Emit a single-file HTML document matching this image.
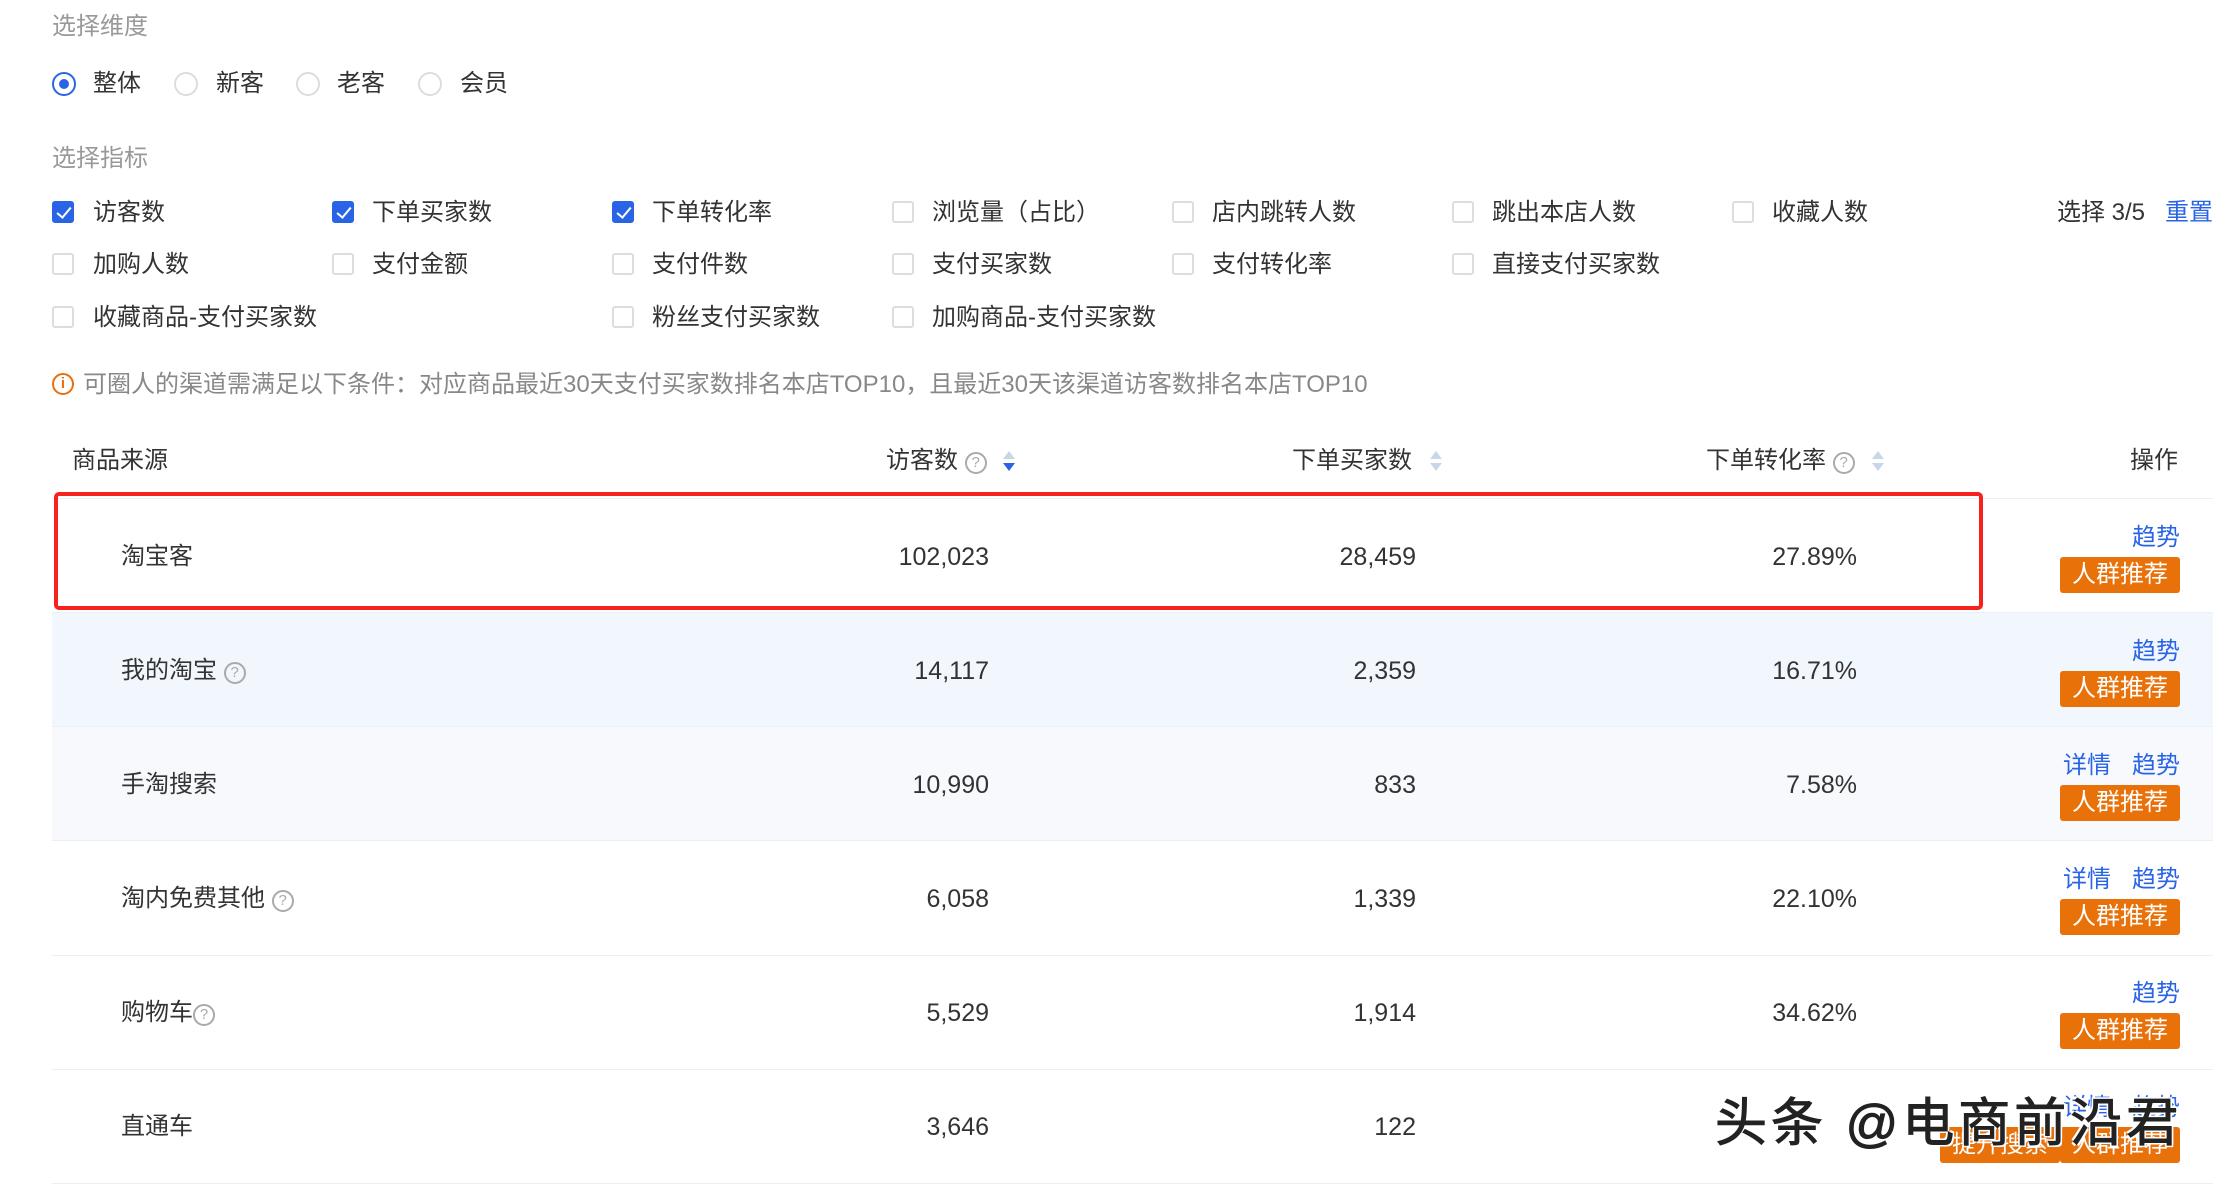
<!DOCTYPE html>
<html><head><meta charset="utf-8"><style>
*{margin:0;padding:0;box-sizing:border-box}
body{width:2213px;height:1186px;background:#fff;font-family:"Liberation Sans","Noto Sans CJK SC",sans-serif;color:#333;font-size:24px;position:relative;overflow:hidden}
#w{position:absolute;left:0;top:2px;width:2213px;height:1186px}
.a{position:absolute;white-space:nowrap;line-height:1}
.g{color:#999}
.rad{position:absolute;width:24px;height:24px;border:2px solid #ddd;border-radius:50%}
.rad.on{border-color:#2a64e6}
.rad.on:after{content:"";position:absolute;left:5px;top:5px;width:10px;height:10px;border-radius:50%;background:#2a64e6}
.cb{position:absolute;width:22px;height:22px;border:2px solid #ddd;border-radius:3px}
.cb.on{background:#2a64e6;border-color:#2a64e6}
.cb.on:after{content:"";position:absolute;left:6px;top:1px;width:6px;height:12px;border:solid #fff;border-width:0 2px 2px 0;transform:rotate(40deg)}
.row{position:absolute;left:52px;width:2161px;height:114px;border-bottom:1px solid #eceff3}
.q{display:inline-block;width:22px;height:22px;border:2px solid #aaa;border-radius:50%;font-size:15px;color:#aaa;text-align:center;line-height:18px;vertical-align:1px}
.btn{position:absolute;left:2060px;width:120px;height:36px;background:#e8710a;color:#fff;border-radius:3px;font-size:24px;text-align:center;line-height:36px}
.lk{position:absolute;color:#2a64e6;font-size:24px;line-height:1}
.num{position:absolute;text-align:right;line-height:1;font-size:25px}
.sort{position:absolute;width:12px;height:22px}
.sort:before{content:"";position:absolute;left:0;top:0;border:6px solid transparent;border-bottom:8px solid #c9d6ea;border-top:0}
.sort:after{content:"";position:absolute;left:0;top:12px;border:6px solid transparent;border-top:8px solid #c9d6ea;border-bottom:0}
.sort.d:after{border-top-color:#2a64e6}
</style></head><body><div id="w">
<div class="a g" style="left:52px;top:13px">选择维度</div>
<div class="rad on" style="left:52px;top:70px"></div><div class="a" style="left:93px;top:70px">整体</div>
<div class="rad" style="left:174px;top:70px"></div><div class="a" style="left:216px;top:70px">新客</div>
<div class="rad" style="left:296px;top:70px"></div><div class="a" style="left:337px;top:70px">老客</div>
<div class="rad" style="left:418px;top:70px"></div><div class="a" style="left:460px;top:70px">会员</div>
<div class="a g" style="left:52px;top:145px">选择指标</div>

<div class="cb on" style="left:52px;top:199px"></div><div class="a" style="left:93px;top:199px">访客数</div>
<div class="cb on" style="left:332px;top:199px"></div><div class="a" style="left:372px;top:199px">下单买家数</div>
<div class="cb on" style="left:612px;top:199px"></div><div class="a" style="left:652px;top:199px">下单转化率</div>
<div class="cb" style="left:892px;top:199px"></div><div class="a" style="left:932px;top:199px">浏览量（占比）</div>
<div class="cb" style="left:1172px;top:199px"></div><div class="a" style="left:1212px;top:199px">店内跳转人数</div>
<div class="cb" style="left:1452px;top:199px"></div><div class="a" style="left:1492px;top:199px">跳出本店人数</div>
<div class="cb" style="left:1732px;top:199px"></div><div class="a" style="left:1772px;top:199px">收藏人数</div>
<div class="a" style="left:2057px;top:199px">选择 3/5</div><div class="a" style="left:2165px;top:199px;color:#2a64e6">重置</div>

<div class="cb" style="left:52px;top:251px"></div><div class="a" style="left:93px;top:251px">加购人数</div>
<div class="cb" style="left:332px;top:251px"></div><div class="a" style="left:372px;top:251px">支付金额</div>
<div class="cb" style="left:612px;top:251px"></div><div class="a" style="left:652px;top:251px">支付件数</div>
<div class="cb" style="left:892px;top:251px"></div><div class="a" style="left:932px;top:251px">支付买家数</div>
<div class="cb" style="left:1172px;top:251px"></div><div class="a" style="left:1212px;top:251px">支付转化率</div>
<div class="cb" style="left:1452px;top:251px"></div><div class="a" style="left:1492px;top:251px">直接支付买家数</div>

<div class="cb" style="left:52px;top:304px"></div><div class="a" style="left:93px;top:304px">收藏商品-支付买家数</div>
<div class="cb" style="left:612px;top:304px"></div><div class="a" style="left:652px;top:304px">粉丝支付买家数</div>
<div class="cb" style="left:892px;top:304px"></div><div class="a" style="left:932px;top:304px">加购商品-支付买家数</div>

<div class="a" style="left:52px;top:371px;width:22px;height:22px;border:2px solid #e8710a;border-radius:50%;color:#e8710a;font-size:15px;text-align:center;line-height:18px;font-weight:bold">i</div>
<div class="a g" style="left:83px;top:371px;color:#888">可圈人的渠道需满足以下条件：对应商品最近30天支付买家数排名本店TOP10，且最近30天该渠道访客数排名本店TOP10</div>

<div class="a" style="left:72px;top:447px">商品来源</div>
<div class="a" style="left:886px;top:447px">访客数 <span class="q">?</span></div><div class="sort d" style="left:1003px;top:449px"></div>
<div class="a" style="left:1292px;top:447px">下单买家数</div><div class="sort" style="left:1430px;top:449px"></div>
<div class="a" style="left:1706px;top:447px">下单转化率 <span class="q">?</span></div><div class="sort" style="left:1872px;top:449px"></div>
<div class="a" style="left:2130px;top:447px">操作</div>

<div class="row" style="top:497px"></div>
<div class="row" style="top:611px;background:#f2f6fd"></div>
<div class="row" style="top:725px;background:#f7f9fd"></div>
<div class="row" style="top:840px"></div>
<div class="row" style="top:954px"></div>
<div class="row" style="top:1068px"></div>
<div style="position:absolute;left:52px;top:496px;width:2161px;height:1px;background:#eceff3"></div>

<div class="a" style="left:121px;top:543px">淘宝客</div>
<div class="num" style="left:789px;width:200px;top:543px">102,023</div>
<div class="num" style="left:1216px;width:200px;top:543px">28,459</div>
<div class="num" style="left:1657px;width:200px;top:543px">27.89%</div>
<div class="lk" style="left:2132px;top:524px">趋势</div><div class="btn" style="top:555px">人群推荐</div>

<div class="a" style="left:121px;top:657px">我的淘宝 <span class="q">?</span></div>
<div class="num" style="left:789px;width:200px;top:657px">14,117</div>
<div class="num" style="left:1216px;width:200px;top:657px">2,359</div>
<div class="num" style="left:1657px;width:200px;top:657px">16.71%</div>
<div class="lk" style="left:2132px;top:638px">趋势</div><div class="btn" style="top:669px">人群推荐</div>

<div class="a" style="left:121px;top:771px">手淘搜索</div>
<div class="num" style="left:789px;width:200px;top:771px">10,990</div>
<div class="num" style="left:1216px;width:200px;top:771px">833</div>
<div class="num" style="left:1657px;width:200px;top:771px">7.58%</div>
<div class="lk" style="left:2063px;top:752px">详情</div><div class="lk" style="left:2132px;top:752px">趋势</div><div class="btn" style="top:783px">人群推荐</div>

<div class="a" style="left:121px;top:885px">淘内免费其他 <span class="q">?</span></div>
<div class="num" style="left:789px;width:200px;top:885px">6,058</div>
<div class="num" style="left:1216px;width:200px;top:885px">1,339</div>
<div class="num" style="left:1657px;width:200px;top:885px">22.10%</div>
<div class="lk" style="left:2063px;top:866px">详情</div><div class="lk" style="left:2132px;top:866px">趋势</div><div class="btn" style="top:897px">人群推荐</div>

<div class="a" style="left:121px;top:999px">购物车<span class="q">?</span></div>
<div class="num" style="left:789px;width:200px;top:999px">5,529</div>
<div class="num" style="left:1216px;width:200px;top:999px">1,914</div>
<div class="num" style="left:1657px;width:200px;top:999px">34.62%</div>
<div class="lk" style="left:2132px;top:980px">趋势</div><div class="btn" style="top:1011px">人群推荐</div>

<div class="a" style="left:121px;top:1113px">直通车</div>
<div class="num" style="left:789px;width:200px;top:1113px">3,646</div>
<div class="num" style="left:1216px;width:200px;top:1113px">122</div>
<div class="lk" style="left:2063px;top:1094px">详情</div><div class="lk" style="left:2132px;top:1094px">趋势</div>
<div class="btn" style="left:1940px;top:1125px">提升搜索</div><div class="btn" style="top:1125px">人群推荐</div>

<div style="position:absolute;left:54px;top:490px;width:1929px;height:118px;border:4px solid #f5221d;border-radius:5px"></div>

<div class="a" style="left:1715px;top:1096px;font-size:52px;letter-spacing:4px;color:#222;-webkit-text-stroke:1px #222;text-shadow:2px 2px 0 #fff,-2px -2px 0 #fff,2px -2px 0 #fff,-2px 2px 0 #fff">头条 @电商前沿君</div>
</div></body></html>
